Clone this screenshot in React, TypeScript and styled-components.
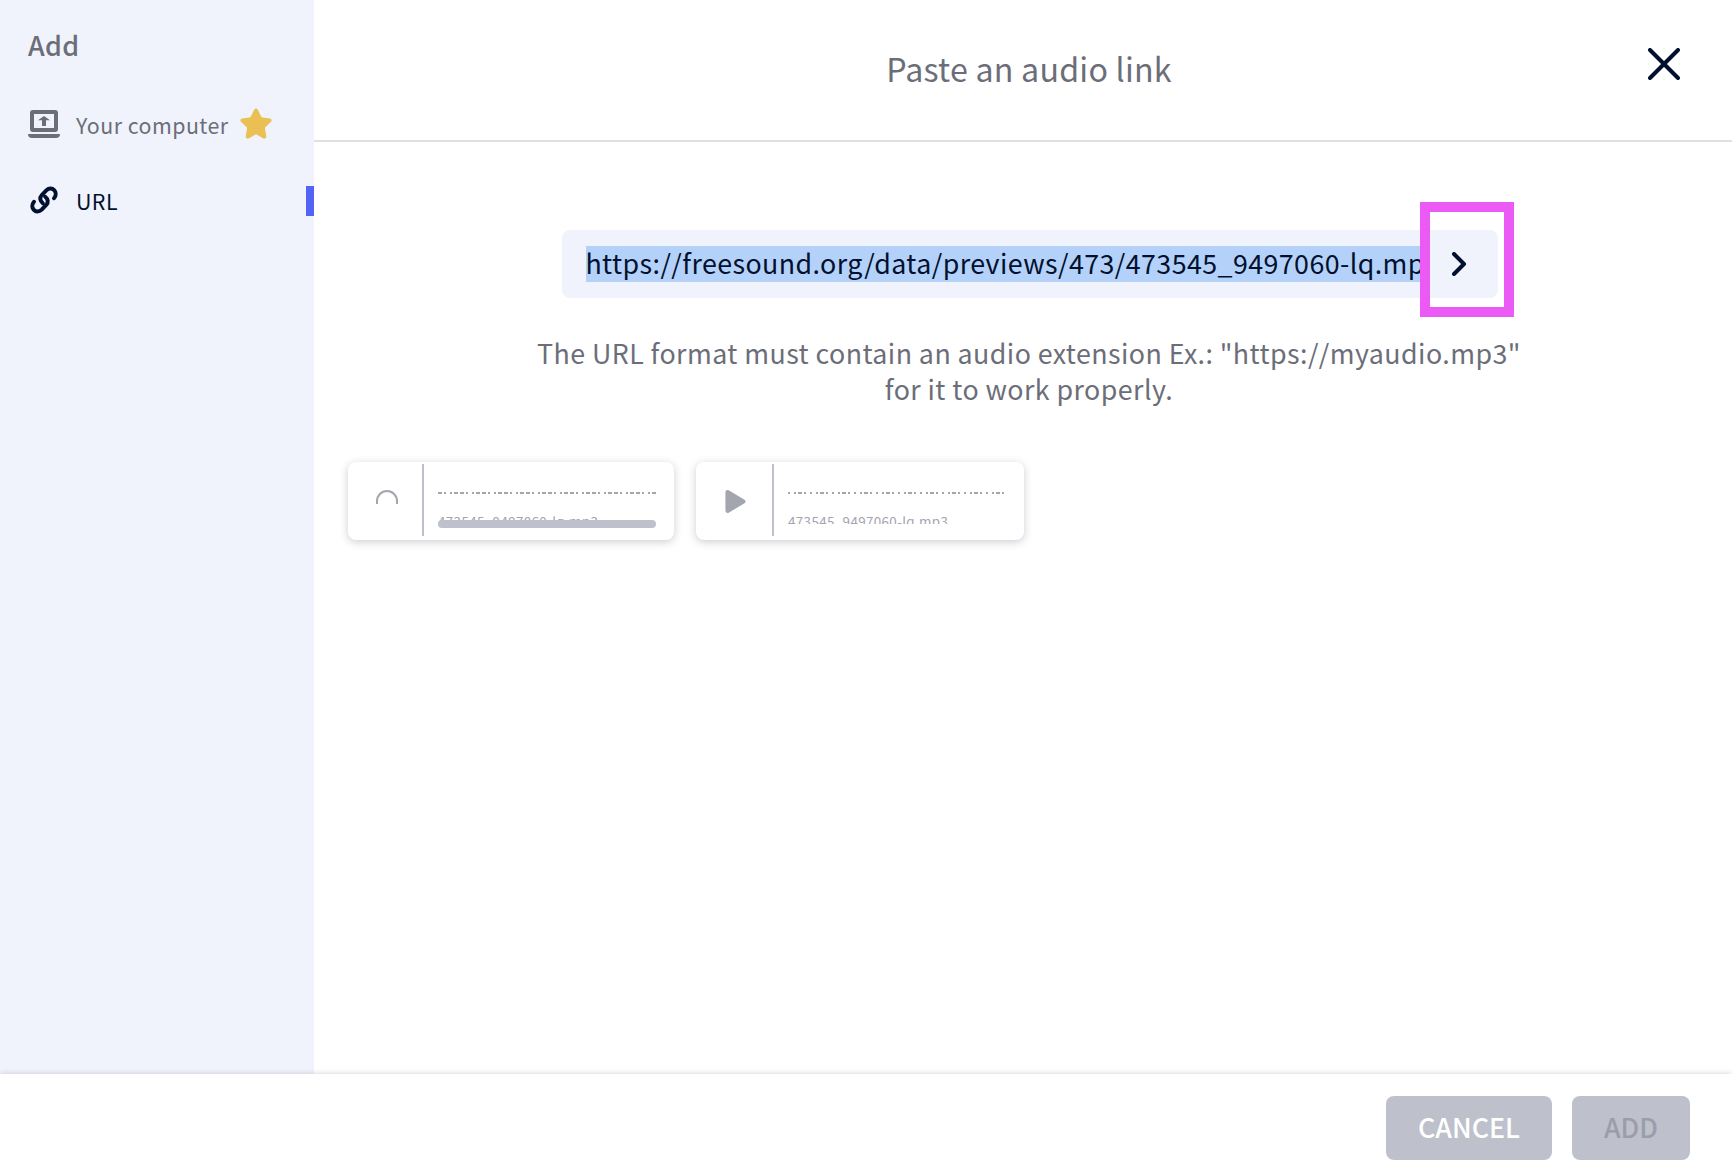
import React from "react";
import styled, { createGlobalStyle } from "styled-components";
import { FaPlay } from "react-icons/fa";
import { FaStar } from "react-icons/fa6";

const Global = createGlobalStyle`
  * { box-sizing: border-box; }
  body {
    margin: 0;
    background: #fff;
    font-family: "Noto Sans CJK SC", "Open Sans", sans-serif;
    color: #6b6e78;
    overflow: hidden;
  }
`;

const Dialog = styled.div`
  display: flex;
  flex-direction: column;
  width: 1732px;
  height: 1176px;
  overflow: hidden;
`;

const Body = styled.div`
  display: flex;
  height: 1074px;
`;

const Sidebar = styled.aside`
  width: 314px;
  background: #f0f3fc;
  padding-top: 25px;
`;

const SidebarTitle = styled.h2`
  margin: 0 0 33px 28px;
  font-size: 26.8px;
  line-height: 40px;
  font-weight: 500;
  letter-spacing: 0.4px;
`;

const NavItem = styled.div<{ $active?: boolean }>`
  display: flex;
  align-items: center;
  height: 52px;
  margin-bottom: 24px;
  padding-left: 28px;
  font-size: 21.4px;
  letter-spacing: 0.45px;
  color: ${(p) => (p.$active ? "#02102f" : "#6b6e78")};
`;

const NavIcon = styled.span`
  display: flex;
  justify-content: center;
  width: 32px;
  margin-right: 16px;
`;

const NavLabel = styled.span`
  line-height: 32px;
  padding-top: 2px;
`;

const Star = styled(FaStar)`
  width: 34px;
  height: 31px;
  margin: 0 0 2px 10px;
  color: #eac054;
`;

const ActiveMark = styled.span`
  width: 8px;
  height: 30px;
  margin: 2px 0 0 auto;
  background: #5364f5;
`;

const Main = styled.main`
  width: 1418px;
`;

const Header = styled.header`
  display: grid;
  grid-template-columns: 84px 1fr 84px;
  height: 142px;
  border-bottom: 2px solid #e0e0e0;
`;

const Title = styled.h1`
  grid-column: 2;
  margin: 44px 0 0 12px;
  font-size: 32.2px;
  line-height: 48px;
  font-weight: 400;
  letter-spacing: 0.22px;
  text-align: center;
  white-space: nowrap;
`;

const CloseButton = styled.button`
  align-self: start;
  margin-top: 48px;
  padding: 0;
  width: 32px;
  height: 32px;
  border: 0;
  background: none;
`;

const Content = styled.section`
  padding: 88px 34px 0;
`;

const LinkField = styled.div`
  display: flex;
  align-items: center;
  position: relative;
  width: 936px;
  height: 68px;
  margin-left: 214px;
  padding-left: 24px;
  border-radius: 8px;
  background: #f0f3fc;
`;

const LinkText = styled.span`
  width: 838px;
  height: 36px;
  line-height: 33px;
  overflow: hidden;
  white-space: nowrap;
  background: #b4d2f9;
  color: #02102f;
  font-size: 26.8px;
  letter-spacing: 0.42px;
  text-indent: -0.6px;
`;

const Submit = styled.span`
  display: flex;
  margin-left: 28px;
`;

const Highlight = styled.span`
  position: absolute;
  left: 858px;
  top: -28px;
  width: 94px;
  height: 115px;
  border: 10px solid #ec5af6;
`;

const Hint = styled.p`
  margin: 37px 0 0 12px;
  font-size: 26.8px;
  line-height: 36px;
  letter-spacing: 0.43px;
  text-align: center;
  white-space: nowrap;
`;

const CardRow = styled.div`
  display: flex;
  gap: 22px;
  margin-top: 55px;
`;

const Card = styled.article<{ $width: number }>`
  display: flex;
  width: ${(p) => p.$width}px;
  height: 78px;
  padding-top: 2px;
  border-radius: 8px;
  background: #fff;
  box-shadow: 0 2px 8px rgba(20, 30, 60, 0.22);
`;

const CardAction = styled.div<{ $width: number; $nudge: number }>`
  display: flex;
  align-items: center;
  justify-content: center;
  width: ${(p) => p.$width}px;
  height: 72px;
  padding: 2px 0 0 ${(p) => p.$nudge}px;
  border-right: 2px solid #bec1cb;
`;

const CardDetail = styled.div`
  width: 218px;
  margin-left: 14px;
  padding-top: 28px;
`;

const Wave = styled.svg`
  display: block;
`;

const FileName = styled.div`
  height: 14px;
  margin-top: 16px;
  overflow: hidden;
  font-size: 13.4px;
  line-height: 22px;
  letter-spacing: 0.36px;
  color: #a3a5af;
  white-space: nowrap;
`;

const Progress = styled.div`
  position: relative;
  height: 8px;
  margin-top: -4px;
  border-radius: 4px;
  background: #bec1cb;
`;

const Footer = styled.footer`
  position: relative;
  display: flex;
  justify-content: flex-end;
  gap: 20px;
  height: 102px;
  padding: 22px 42px 0 0;
  background: #fff;
  box-shadow: 0 0 6px rgba(0, 0, 0, 0.18);
`;

const Button = styled.button<{ $width: number; $muted?: boolean }>`
  width: ${(p) => p.$width}px;
  height: 64px;
  padding: 0 0 3px;
  border: 0;
  border-radius: 8px;
  background: #bec1cb;
  color: ${(p) => (p.$muted ? "#9b9dab" : "#fff")};
  font-family: inherit;
  font-size: 26.8px;
  font-weight: 500;
`;

const WaveForm = ({ period }: { period: number[][] }) => (
  <Wave width="218" height="2" fill="#a3a5af" shapeRendering="crispEdges">
    {Array.from({ length: 10 }, (_, i) =>
      period.map(([x, w]) => <rect key={i + "-" + x} x={x + i * 22} y="0" width={w} height="2" />)
    )}
  </Wave>
);

export default function App() {
  return (
    <>
      <Global />
      <Dialog>
        <Body>
          <Sidebar>
            <SidebarTitle>Add</SidebarTitle>
            <NavItem>
              <NavIcon>
                <svg width="32" height="28" viewBox="0 0 32 28" fill="#6b6e78">
                  <path fillRule="evenodd" d="M5 0h22q3 0 3 3v16q0 3-3 3H5q-3 0-3-3V3q0-3 3-3zM6 4v14h20V4z" />
                  <path d="M16 6l6 4.2h-4V16h-4v-5.8h-4zM0 24h32q0 4-4 4H4q-4 0-4-4z" />
                </svg>
              </NavIcon>
              <NavLabel>Your computer</NavLabel>
              <Star />
            </NavItem>
            <NavItem $active>
              <NavIcon>
                <svg width="28" height="28" viewBox="0 0 28 28" fill="none" stroke="currentColor" strokeWidth="4" strokeLinecap="round">
                  <path d="M12.800 17.200C10 15 9.300 11.800 11.800 9L16.300 4.400C22-1 29 6.500 24 12.200" />
                  <path d="M15.200 10.800C18 13 18.700 16.200 16.200 19L11.700 23.600C6 29-1 21.500 4 15.800" />
                </svg>
              </NavIcon>
              <NavLabel>URL</NavLabel>
              <ActiveMark />
            </NavItem>
          </Sidebar>
          <Main>
            <Header>
              <Title>Paste an audio link</Title>
              <CloseButton aria-label="Close">
                <svg width="32" height="32" stroke="#02102f" strokeWidth="4" strokeLinecap="round">
                  <path d="M2 2l28 28M30 2L2 30" />
                </svg>
              </CloseButton>
            </Header>
            <Content>
              <LinkField>
                <LinkText>https://freesound.org/data/previews/473/473545_9497060-lq.mp3</LinkText>
                <Submit>
                  <svg width="16" height="24" fill="none" stroke="#02102f" strokeWidth="4" strokeLinecap="round" strokeLinejoin="round">
                    <path d="M2 2l10 10L2 22" />
                  </svg>
                </Submit>
                <Highlight />
              </LinkField>
              <Hint>
                The URL format must contain an audio extension Ex.: "https://myaudio.mp3"
                <br />
                for it to work properly.
              </Hint>
              <CardRow>
                <Card $width={326}>
                  <CardAction $width={76} $nudge={4}>
                    <svg width="24" height="24" fill="none" stroke="#a3a5af" strokeWidth="2">
                      <path d="M2 15v-3a10 10 0 0 1 20 0v3" />
                    </svg>
                  </CardAction>
                  <CardDetail>
                    <WaveForm period={[[0, 4], [6, 2], [12, 2], [16, 4]]} />
                    <FileName>473545_9497060-lq.mp3</FileName>
                    <Progress />
                  </CardDetail>
                </Card>
                <Card $width={328}>
                  <CardAction $width={78} $nudge={2}>
                    <FaPlay size={23} color="#a3a5af" />
                  </CardAction>
                  <CardDetail>
                    <WaveForm period={[[0, 2], [6, 2], [10, 4], [16, 2]]} />
                    <FileName>473545_9497060-lq.mp3</FileName>
                  </CardDetail>
                </Card>
              </CardRow>
            </Content>
          </Main>
        </Body>
        <Footer>
          <Button $width={166}>CANCEL</Button>
          <Button $width={118} $muted>ADD</Button>
        </Footer>
      </Dialog>
    </>
  );
}
